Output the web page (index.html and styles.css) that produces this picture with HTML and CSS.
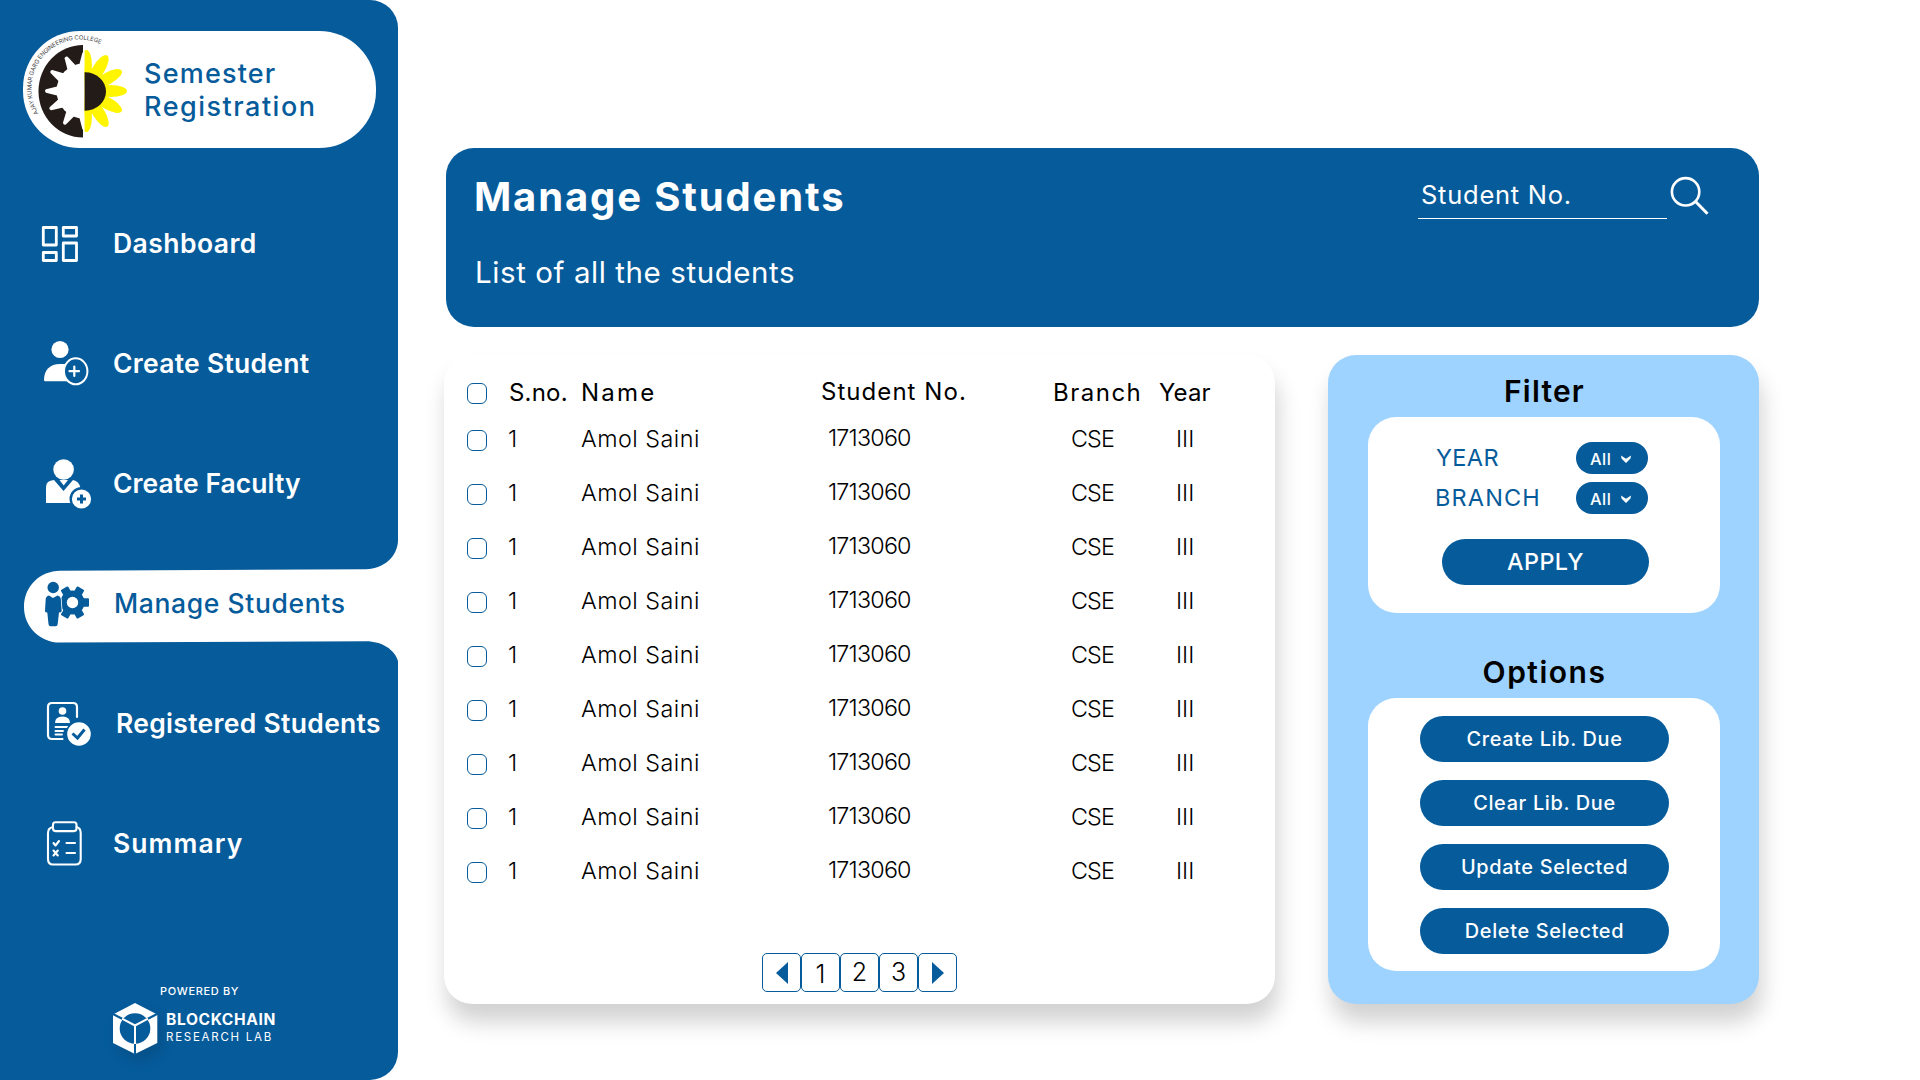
FILE: index.html
```
<!DOCTYPE html>
<html lang="en">
<head>
<meta charset="utf-8">
<title>Semester Registration – Manage Students</title>
<link rel="stylesheet" href="styles.css">
</head>
<body>
<div class="app">
  <aside class="sidebar">
    <div class="brand">
      <svg class="brand-logo" viewBox="23 31 118 117" width="118" height="117">
        <defs>
          <path id="arc" d="M38.6 113.500 A48.600 48.600 0 0 1 109.500 49.500"/>
          <clipPath id="right-half"><rect x="84.6" y="40" width="50" height="100"/></clipPath>
          <clipPath id="left-half"><rect x="30" y="40" width="53" height="100"/></clipPath>
        </defs>
        <text class="arc-text"><textPath href="#arc" textLength="124">AJAY KUMAR GARG ENGINEERING COLLEGE</textPath></text>
        <path d="M83 45 V137.600 A44.500 46.300 0 0 1 83 45Z" fill="#231b18"/>
        <g clip-path="url(#left-half)" fill="#fff">
          <circle cx="84" cy="91" r="27.500"/>
          <path d="M59 86 L46 89.300 Q44 91 46 92.700 L59 96Z"/>
          <path d="M59 86 L46 89.300 Q44 91 46 92.700 L59 96Z" transform="rotate(31 84 91)"/>
          <path d="M59 86 L46 89.300 Q44 91 46 92.700 L59 96Z" transform="rotate(62 84 91)"/>
          <path d="M59 86 L46 89.300 Q44 91 46 92.700 L59 96Z" transform="rotate(90 84 91)"/>
          <path d="M59 86 L46 89.300 Q44 91 46 92.700 L59 96Z" transform="rotate(-28 84 91)"/>
          <path d="M59 86 L46 89.300 Q44 91 46 92.700 L59 96Z" transform="rotate(-59 84 91)"/>
          <path d="M59 86 L46 89.300 Q44 91 46 92.700 L59 96Z" transform="rotate(-90 84 91)"/>
        </g>
        <g clip-path="url(#right-half)">
          <g fill="#fff500">
            <ellipse cx="111" cy="91" rx="16" ry="6"/>
            <ellipse cx="111" cy="91" rx="16" ry="6" transform="rotate(29 85 91)"/>
            <ellipse cx="111" cy="91" rx="16" ry="6" transform="rotate(58 85 91)"/>
            <ellipse cx="110" cy="91" rx="16" ry="6" transform="rotate(88 85 91)"/>
            <ellipse cx="111" cy="91" rx="16" ry="6" transform="rotate(-29 85 91)"/>
            <ellipse cx="111" cy="91" rx="16" ry="6" transform="rotate(-58 85 91)"/>
            <ellipse cx="110" cy="91" rx="16" ry="6" transform="rotate(-88 85 91)"/>
            <circle cx="85" cy="91" r="24"/>
          </g>
          <ellipse cx="85" cy="91.500" rx="21" ry="19.200" fill="#231b18"/>
        </g>
      </svg>
      <div class="brand-name"><span class="l1">Semester</span><span class="l2">Registration</span></div>
    </div>

    <nav class="nav">
      <a class="nav-item dashboard">
        <svg viewBox="36 214 60 60"><g fill="none" stroke="#fff" stroke-width="2.800" stroke-linejoin="round"><rect x="43.300" y="227.500" width="13" height="17.500"/><rect x="63.300" y="227.500" width="13.200" height="8.500"/><rect x="43.300" y="252.500" width="13" height="8"/><rect x="63.300" y="243" width="13.200" height="17.500"/></g></svg>
        <span>Dashboard</span>
      </a>
      <a class="nav-item student">
        <svg viewBox="36 334 60 60"><circle cx="60" cy="349.500" r="8.600" fill="#fff"/><path d="M44 380 C44 370 50 364 60 364 H70 V381.300 H45.200 Q44 381.300 44 380Z" fill="#fff"/><ellipse cx="75.700" cy="371.300" rx="11.700" ry="13" fill="#065b9b" stroke="#fff" stroke-width="2"/><path d="M74.300 366.500 V376 M69.500 371.200 H79" stroke="#fff" stroke-width="2.200" stroke-linecap="round"/></svg>
        <span>Create Student</span>
      </a>
      <a class="nav-item faculty">
        <svg viewBox="36 454 60 60"><path d="M46 503 V487 Q46 480.500 54 480 L63.500 491 L73 480 Q79 481 80.500 488 L71 503Z" fill="#fff"/><path d="M59.500 480 H68 L63.700 485.500Z" fill="#fff"/><ellipse cx="63.600" cy="469.500" rx="10.300" ry="10.300" fill="#fff"/><circle cx="81.500" cy="499" r="10.800" fill="#fff" stroke="#065b9b" stroke-width="2.400"/><path d="M81.500 494.500 V503.500 M77 499 H86" stroke="#065b9b" stroke-width="3"/></svg>
        <span>Create Faculty</span>
      </a>
      <a class="nav-item manage active">
        <svg class="active-shape" viewBox="24 540 374 122"><path d="M398 540 C398 556 384 569 366 569.300 L60 570.700 C40 571 24 586 24 607 C24 627 40 642.600 60 642.600 L366 641.300 C382 641.300 395 650 398 661Z" fill="#fff"/></svg>
        <svg viewBox="36 574 60 60" fill="#065b9b">
          <circle cx="72.500" cy="602.500" r="12"/>
          <g><rect x="76" y="598.300" width="13" height="8.400" rx="1"/><rect x="76" y="598.300" width="13" height="8.400" rx="1" transform="rotate(60 72.500 602.500)"/><rect x="76" y="598.300" width="13" height="8.400" rx="1" transform="rotate(120 72.500 602.500)"/><rect x="76" y="598.300" width="13" height="8.400" rx="1" transform="rotate(-60 72.500 602.500)"/><rect x="76" y="598.300" width="13" height="8.400" rx="1" transform="rotate(-120 72.500 602.500)"/></g>
          <circle cx="72.500" cy="602.500" r="5.700" fill="#fff"/>
          <path d="M49 595.500 L53 598 L57.500 595.500 Q60.500 596 60.800 599 L61.700 611 Q61.500 612.500 59 612.500 L57.700 624 Q57.500 626.200 55.500 626.200 H50.500 Q48.700 626.200 48.500 624 L47.300 612.500 Q45 612.500 45 611 L45.700 599 Q46 596 49 595.500Z" stroke="#fff" stroke-width="1.600" paint-order="stroke"/>
          <circle cx="53.200" cy="587.500" r="5.700"/>
        </svg>
        <span>Manage Students</span>
      </a>
      <a class="nav-item registered">
        <svg viewBox="36 694 60 60"><path d="M77 717 V707 Q77 703 73 703 H52 Q48 703 48 707 V735 Q48 739 52 739 H62.500" fill="none" stroke="#fff" stroke-width="2.200" stroke-linecap="round"/><circle cx="62.500" cy="711" r="3.800" fill="#fff"/><path d="M55 723 Q55 716.500 62.500 716.500 Q70 716.500 70 723Z" fill="#fff"/><path d="M55.500 727 H67.500 M55.500 731 H63 M55.500 734.500 H62" stroke="#fff" stroke-width="1.900" stroke-linecap="round"/><circle cx="79" cy="734" r="12.600" fill="#fff" stroke="#065b9b" stroke-width="1.600"/><path d="M72.500 733.500 L77.500 738 L84.500 729.500" fill="none" stroke="#065b9b" stroke-width="3"/></svg>
        <span>Registered Students</span>
      </a>
      <a class="nav-item summary">
        <svg viewBox="36 814 60 60"><g fill="none" stroke="#fff" stroke-width="2.100" stroke-linecap="round" stroke-linejoin="round"><path d="M53 827 Q48 828 48 833 V859 Q48 864.500 53 864.500 H75.500 Q80.700 864.500 80.700 859 V833 Q80.700 828 76.500 827"/><rect x="53" y="822.300" width="23.500" height="8.800" rx="2.500"/><path d="M66.500 843 H75 M66.500 853 H75"/><path d="M53.500 843 L55.500 845.500 L59 841 M53.500 850.500 L57.800 855.500 M57.800 850.500 L53.500 855.500"/></g></svg>
        <span>Summary</span>
      </a>
    </nav>

    <footer class="powered">
      <p class="powered-by">POWERED BY</p>
      <div class="lab">
        <svg class="lab-logo" viewBox="112 1002 46 53" width="46" height="53"><path d="M135 1003 L157.300 1014.500 V1043 L135 1054 L113 1043 V1014.500Z" fill="#fff"/><path d="M135 1025.500 L112 1013.500 M135 1025.500 L158 1013.500 M135 1025.500 V1055" stroke="#065b9b" stroke-width="2"/><circle cx="135" cy="1028.500" r="15.300" fill="#065b9b"/><path d="M122 1018.700 L135 1025.500 L148 1018.700 M135 1025.500 V1044" fill="none" stroke="#fff" stroke-width="2"/></svg>
        <div class="lab-name"><span class="lab-top">BLOCKCHAIN</span><span class="lab-bottom">RESEARCH LAB</span></div>
      </div>
    </footer>
  </aside>

  <main class="content">
    <header class="banner">
      <div>
        <h1>Manage Students</h1>
        <p>List of all the students</p>
      </div>
      <div class="search">
        <span class="search-field">Student No.</span>
        <svg viewBox="1670 176 40 40" width="40" height="40"><g fill="none" stroke="#fff" stroke-width="2.600"><circle cx="1685.600" cy="191.800" r="13.700"/><path d="M1695.500 201.500 L1707.500 213.700" stroke-width="3"/></g></svg>
      </div>
    </header>

    <div class="panels">
      <section class="list">
        <div class="row head"><i class="check"></i><span class="sno">S.no.</span><span class="name">Name</span><span class="num">Student No.</span><span class="branch">Branch</span><span class="year">Year</span></div>
        <div class="row"><i class="check"></i><span>1</span><span class="name">Amol Saini</span><span class="num">1713060</span><span class="branch">CSE</span><span class="year">III</span></div>
        <div class="row"><i class="check"></i><span>1</span><span class="name">Amol Saini</span><span class="num">1713060</span><span class="branch">CSE</span><span class="year">III</span></div>
        <div class="row"><i class="check"></i><span>1</span><span class="name">Amol Saini</span><span class="num">1713060</span><span class="branch">CSE</span><span class="year">III</span></div>
        <div class="row"><i class="check"></i><span>1</span><span class="name">Amol Saini</span><span class="num">1713060</span><span class="branch">CSE</span><span class="year">III</span></div>
        <div class="row"><i class="check"></i><span>1</span><span class="name">Amol Saini</span><span class="num">1713060</span><span class="branch">CSE</span><span class="year">III</span></div>
        <div class="row"><i class="check"></i><span>1</span><span class="name">Amol Saini</span><span class="num">1713060</span><span class="branch">CSE</span><span class="year">III</span></div>
        <div class="row"><i class="check"></i><span>1</span><span class="name">Amol Saini</span><span class="num">1713060</span><span class="branch">CSE</span><span class="year">III</span></div>
        <div class="row"><i class="check"></i><span>1</span><span class="name">Amol Saini</span><span class="num">1713060</span><span class="branch">CSE</span><span class="year">III</span></div>
        <div class="row"><i class="check"></i><span>1</span><span class="name">Amol Saini</span><span class="num">1713060</span><span class="branch">CSE</span><span class="year">III</span></div>
        <div class="pager">
          <a><svg viewBox="0 0 12 22" width="12" height="22"><path d="M12 0 V22 L0 11Z" fill="#065b9b"/></svg></a>
          <a class="one">1</a><a>2</a><a>3</a>
          <a><svg viewBox="0 0 12 22" width="12" height="22"><path d="M0 0 V22 L12 11Z" fill="#065b9b"/></svg></a>
        </div>
      </section>

      <section class="tools">
        <h2 class="filter-title">Filter</h2>
        <div class="box filter">
          <div class="field"><span class="f-year">YEAR</span><b class="select">All<svg viewBox="0 0 10 8" width="10" height="8"><path d="M0 .5 L5 3.800 L10 .5 L9.500 3.500 L5 8 L.5 3.500Z" fill="#fff"/></svg></b></div>
          <div class="field"><span class="f-branch">BRANCH</span><b class="select">All<svg viewBox="0 0 10 8" width="10" height="8"><path d="M0 .5 L5 3.800 L10 .5 L9.500 3.500 L5 8 L.5 3.500Z" fill="#fff"/></svg></b></div>
          <a class="btn apply">APPLY</a>
        </div>
        <h2 class="options-title">Options</h2>
        <div class="box options">
          <a class="btn">Create Lib. Due</a>
          <a class="btn">Clear Lib. Due</a>
          <a class="btn">Update Selected</a>
          <a class="btn">Delete Selected</a>
        </div>
      </section>
    </div>
  </main>
</div>
</body>
</html>
```
FILE: styles.css
```
* { box-sizing: border-box; }
body {
  margin: 0;
  background: #fff;
  color: #000;
  font-family: "Inter", "Open Sans", sans-serif;
}
h1, h2, p { margin: 0; }
svg { display: block; flex: none; }

.app { display: flex; width: 1920px; height: 1080px; overflow: hidden; }

/* Sidebar */
.sidebar {
  display: flex;
  flex-direction: column;
  width: 398px;
  height: 1080px;
  background: #065b9b;
  border-radius: 0 28px 28px 0;
  color: #fff;
}
.brand {
  display: flex;
  width: 353px;
  height: 117px;
  margin: 31px 0 36px 23px;
  background: #fff;
  border-radius: 57px;
  color: #065b9b;
}
.arc-text { font-size: 6px; fill: #444; }
.brand-name {
  display: flex;
  flex-direction: column;
  padding: 25.5px 0 0 3px;
  font-size: 27px;
  font-weight: 500;
  line-height: 33px;
  white-space: nowrap;
}
.l1 { letter-spacing: 1.2px; }
.l2 { letter-spacing: 1.5px; }

.nav-item {
  position: relative;
  display: flex;
  align-items: center;
  height: 120px;
  padding-left: 36px;
  font-size: 26.5px;
  font-weight: 600;
  white-space: nowrap;
}
.nav-item svg { width: 60px; height: 60px; }
.nav-item span { margin-left: 17px; padding-bottom: 2px; }
.dashboard span { letter-spacing: .45px; }
.student span { letter-spacing: .27px; }
.faculty span { letter-spacing: .05px; }
.manage span { margin-left: 18px; font-weight: 500; letter-spacing: .62px; }
.registered span { margin-left: 20px; letter-spacing: .3px; }
.summary span { letter-spacing: 1.05px; }
.active { color: #065b9b; }
.active > * { position: relative; }
.nav-item .active-shape {
  position: absolute;
  left: 24px;
  top: -4px;
  width: 374px;
  height: 122px;
}

.powered { padding: 80px 0 0 112px; }
.powered-by {
  padding-left: 48px;
  font-size: 11px;
  font-weight: 500;
  line-height: 14px;
  letter-spacing: .65px;
}
.lab { display: flex; margin-top: 4px; }
.lab-logo { overflow: visible; filter: drop-shadow(5px 7px 7px rgba(0, 0, 0, .12)); }
.lab-name { display: flex; flex-direction: column; padding: 9px 0 0 8px; white-space: nowrap; }
.lab-top { font-size: 15.6px; font-weight: 700; line-height: 18px; letter-spacing: .6px; }
.lab-bottom { font-size: 11.5px; line-height: 17px; letter-spacing: 1.75px; }

/* Main area */
.content { padding: 148px 0 0 48px; }
.banner {
  display: flex;
  justify-content: space-between;
  width: 1313px;
  height: 179px;
  padding: 23px 49px 0 27px;
  background: #065b9b;
  border-radius: 28px;
  color: #fff;
}
h1 { padding-left: 1px; font-size: 40px; font-weight: 700; line-height: 51px; letter-spacing: 1.85px; }
.banner p { margin-top: 30px; padding-left: 2px; font-size: 29.5px; line-height: 40px; letter-spacing: .58px; }
.search { display: flex; padding-top: 5px; }
.search-field {
  width: 249px;
  height: 43px;
  margin-right: 3px;
  padding-left: 3px;
  border-bottom: 1px solid #fff;
  font-size: 25.5px;
  line-height: 38px;
  letter-spacing: .75px;
}

.panels { display: flex; justify-content: space-between; width: 1315px; margin: 28px 0 0 -2px; }

/* Student list */
.list {
  width: 831px;
  height: 649px;
  padding: 18px 0 0 23px;
  background: #fff;
  border-radius: 28px;
  box-shadow: 3px 18px 22px rgba(0, 0, 0, .18);
}
.row {
  display: grid;
  grid-template-columns: 41px 73px 239px 233px 105px 1fr;
  align-items: center;
  height: 54px;
  font-size: 23.3px;
  font-weight: 300;
  white-space: nowrap;
}
.row span { padding-bottom: 4px; }
.row .name { letter-spacing: .5px; }
.row .num { padding: 0 0 6px 8px; letter-spacing: -.8px; }
.row .branch { padding-left: 18px; letter-spacing: -.9px; }
.row .year { padding-left: 18px; }
.head { height: 40px; font-size: 24px; font-weight: 400; }
.head span { padding-bottom: 1px; }
.head .sno { padding-left: 1px; letter-spacing: .2px; }
.head .name { letter-spacing: 2.2px; }
.head .num { padding: 0 0 3px 1px; letter-spacing: 1.05px; }
.head .branch { padding-left: 0; letter-spacing: 1.5px; }
.head .year { padding-left: 1px; letter-spacing: .15px; }
.check { width: 20px; height: 21px; border: 1.5px solid #065b9b; border-radius: 6px; }

.pager { display: flex; margin: 54px 0 0 295px; }
.pager a {
  display: flex;
  align-items: center;
  justify-content: center;
  width: 39px;
  height: 39px;
  padding-bottom: 2px;
  border: 1.5px solid #065b9b;
  border-radius: 5px;
  font-size: 25px;
  font-weight: 300;
}
.pager svg { margin: 2px 0 0 1px; }
.pager .one { padding: 2px 0 0; }

/* Filter and options */
.tools {
  width: 431px;
  height: 649px;
  padding: 0 40px;
  background: #9dd3fe;
  border-radius: 28px;
  box-shadow: 3px 18px 22px rgba(0, 0, 0, .18);
}
h2 { font-size: 30px; font-weight: 600; text-align: center; }
.filter-title { height: 62px; padding: 10px 0 0 2px; line-height: 52px; letter-spacing: 1.2px; }
.options-title { height: 51px; margin-top: 34px; padding-left: 2px; line-height: 51px; letter-spacing: 1.5px; }
.box { width: 352px; background: #fff; border-radius: 28px; }
.filter { height: 196px; padding: 25px 72px 0 67px; }
.field {
  display: flex;
  justify-content: space-between;
  align-items: center;
  height: 32px;
  margin-bottom: 8px;
  color: #065b9b;
  font-size: 23.5px;
}
.field > span { padding-bottom: 2px; }
.f-year { letter-spacing: .4px; padding-left: 1px; }
.f-branch { letter-spacing: 1.15px; }
.select {
  display: flex;
  align-items: center;
  width: 72px;
  height: 32px;
  padding: 2px 0 0 14px;
  background: #065b9b;
  border-radius: 16px;
  color: #fff;
  font-size: 16.4px;
  font-weight: 500;
  letter-spacing: .5px;
}
.select svg { margin-left: 10px; }
.btn {
  display: block;
  height: 46px;
  background: #065b9b;
  border-radius: 23px;
  color: #fff;
  font-size: 19.9px;
  font-weight: 500;
  line-height: 46px;
  letter-spacing: .65px;
  text-align: center;
}
.apply {
  width: 207px;
  margin: 25px 0 0 7px;
  font-size: 23.3px;
  letter-spacing: .45px;
}
.options {
  display: flex;
  flex-direction: column;
  gap: 18px;
  height: 273px;
  padding: 18px 51px 0 52px;
}
```
